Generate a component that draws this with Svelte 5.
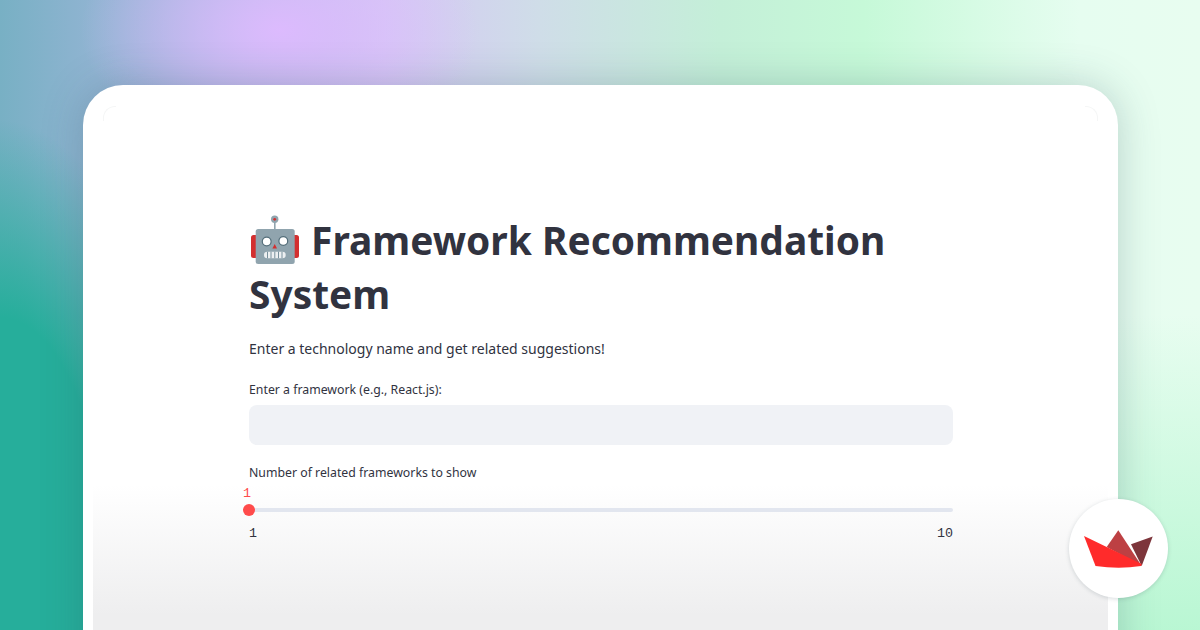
<script>
  let framework = $state('');
  let count = $state(1);
</script>

<div class="page">
  <div class="blobs"></div>
  <main class="card">
    <div class="sheet">
      <div class="content">
        <h1>
          <svg class="robot" viewBox="0 0 52 50" aria-hidden="true">
            <rect x="2" y="20" width="7" height="23" rx="2.5" fill="#d32f2f" />
            <rect x="43" y="20" width="7" height="23" rx="2.5" fill="#d32f2f" />
            <rect x="25" y="6" width="1.6" height="9" fill="#90a4ae" />
            <circle cx="25.7" cy="4.3" r="3.7" fill="#90a4ae" />
            <circle cx="25.7" cy="4.3" r="1.4" fill="#d32f2f" />
            <rect x="6.7" y="14" width="39" height="35" rx="2.5" fill="#90a4ae" />
            <circle cx="17.7" cy="26.5" r="4.4" fill="#fff" stroke="#546e7a" stroke-width="1.2" />
            <circle cx="34.3" cy="26" r="4.4" fill="#fff" stroke="#546e7a" stroke-width="1.2" />
            <path d="M25.7 29 L28 33.5 L23.4 33.5 Z" fill="#d32f2f" />
            <rect x="15" y="36.7" width="21.7" height="6.6" rx="3.2" fill="#eceff1" />
            <path d="M18.5 36.7v6.6M22 36.7v6.6M25.8 36.7v6.6M29.5 36.7v6.6M33 36.7v6.6" stroke="#78909c" stroke-width="1" />
          </svg>
          Framework Recommendation System
        </h1>
        <p class="lead">Enter a technology name and get related suggestions!</p>

        <label class="field-label" for="framework">Enter a framework (e.g., React.js):</label>
        <input id="framework" type="text" bind:value={framework} />

        <div class="field-label slider-label">Number of related frameworks to show</div>
        <div class="slider">
          <span class="thumb-value">{count}</span>
          <div class="track"><span class="thumb"></span></div>
          <div class="ticks"><span>1</span><span>10</span></div>
        </div>
      </div>
    </div>
  </main>

  <div class="badge">
    <svg viewBox="0 0 70 38" width="70" height="38" aria-hidden="true">
      <path d="M22.7 17 L34.3 0.3 L57.7 36 Z" fill="#bd4043" />
      <path d="M47 14.3 L68.7 6.5 L57.7 36 Z" fill="#7d353b" />
      <path d="M0 6 L57.7 34 L57 36 Q35 39.5 11.5 36 Z" fill="#ff2b2b" />
    </svg>
  </div>
</div>

<style>
  :global(body) {
    margin: 0;
  }
  .page {
    position: relative;
    box-sizing: border-box;
    width: 1200px;
    height: 630px;
    overflow: hidden;
    padding: 85px 82px 0 83px;
    font-family: "Noto Sans", sans-serif;
    color: #31333f;
    background: linear-gradient(90deg, #78b0c4 0%, #a9b8e0 16%, #d4c8f4 32%, #cfdde8 45%, #c4efd8 60%, #c6f9d8 72%, #e6fdf0 90%, #e8fdf0 100%);
  }
  .blobs {
    position: absolute;
    inset: 0;
    background:
      radial-gradient(ellipse 200px 120px at 280px 30px, rgba(222, 186, 255, 0.95), rgba(222, 186, 255, 0) 100%),
      radial-gradient(ellipse 190px 440px at 0 560px, rgba(38, 174, 155, 1) 55%, rgba(38, 174, 155, 0) 100%),
      linear-gradient(180deg, rgba(255, 255, 255, 0) 50%, rgba(180, 246, 208, 0.9) 100%);
  }
  .card {
    position: relative;
    height: 600px;
    padding: 15px 10px 0;
    background: #fff;
    border-radius: 40px 40px 0 0;
    box-shadow: 0 0 40px rgba(40, 80, 90, 0.25);
  }
  .sheet {
    position: relative;
    box-sizing: border-box;
    height: 100%;
    padding-top: 113px;
    background: linear-gradient(180deg, #fff 0, #fff 385px, #eeeeef 515px);
  }
  .sheet::before,
  .sheet::after {
    content: "";
    position: absolute;
    top: 6px;
    width: 12px;
    height: 14px;
    border-top: 1px solid #f5f6f6;
  }
  .sheet::before {
    left: 10px;
    border-left: 1px solid #f5f6f6;
    border-top-left-radius: 12px;
  }
  .sheet::after {
    right: 10px;
    border-right: 1px solid #f5f6f6;
    border-top-right-radius: 12px;
  }
  .content {
    width: 704px;
    margin-left: 156px;
  }
  h1 {
    margin: 0;
    font-size: 38.9px;
    line-height: 54px;
    font-weight: 700;
    color: #31333f;
  }
  .robot {
    width: 52px;
    height: 50px;
    vertical-align: -10px;
  }
  .lead {
    margin: 16px 0 0;
    font-size: 14px;
    line-height: 24px;
  }
  .field-label {
    display: block;
    margin-top: 20px;
    font-size: 12.3px;
    line-height: 18px;
  }
  input {
    display: block;
    box-sizing: border-box;
    width: 100%;
    height: 40px;
    margin-top: 6px;
    border: 0;
    border-radius: 8px;
    background: #f0f2f6;
  }
  .slider-label {
    margin-top: 19px;
  }
  .slider {
    position: relative;
    padding-top: 26px;
  }
  .thumb-value {
    position: absolute;
    left: -6px;
    top: 4px;
    font-family: "Liberation Mono", monospace;
    font-size: 13.33px;
    line-height: 16px;
    color: #ff4b4b;
  }
  .track {
    position: relative;
    height: 4px;
    border-radius: 2px;
    background: #e2e6ef;
  }
  .thumb {
    position: absolute;
    left: -6px;
    top: -4px;
    width: 12px;
    height: 12px;
    border-radius: 50%;
    background: #ff4b4b;
  }
  .ticks {
    display: flex;
    justify-content: space-between;
    margin-top: 13px;
    font-family: "Liberation Mono", monospace;
    font-size: 13.33px;
    line-height: 18px;
  }
  .badge {
    position: absolute;
    left: 1069px;
    top: 499px;
    width: 99px;
    height: 99px;
    border-radius: 50%;
    background: #fff;
    box-shadow: 0 1px 4px rgba(60, 80, 90, 0.2);
    display: flex;
    align-items: center;
    justify-content: center;
  }
</style>
